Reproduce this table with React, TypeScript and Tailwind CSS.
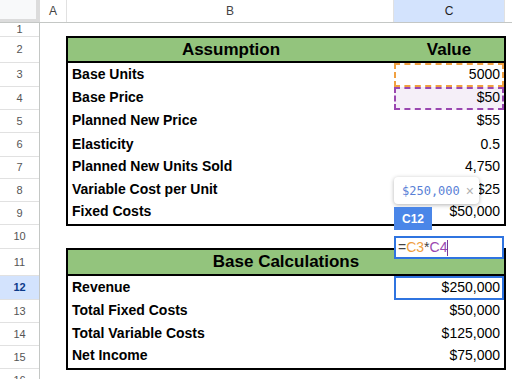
import React from 'react'

const rowHeights = [
  { n: 1, h: 'h-[14px]' },
  { n: 2, h: 'h-[26px]' },
  { n: 3, h: 'h-[24px]' },
  { n: 4, h: 'h-[23px]' },
  { n: 5, h: 'h-[23px]' },
  { n: 6, h: 'h-[24px]' },
  { n: 7, h: 'h-[22px]' },
  { n: 8, h: 'h-[23px]' },
  { n: 9, h: 'h-[23px]' },
  { n: 10, h: 'h-[24px]' },
  { n: 11, h: 'h-[27px]' },
  { n: 12, h: 'h-[24px]' },
  { n: 13, h: 'h-[23px]' },
  { n: 14, h: 'h-[23px]' },
  { n: 15, h: 'h-[23px]' },
  { n: 16, h: 'h-[23px]' },
]

const assumptions = [
  { label: 'Base Units', value: '5000', mark: 'orange' },
  { label: 'Base Price', value: '$50', mark: 'purple' },
  { label: 'Planned New Price', value: '$55' },
  { label: 'Elasticity', value: '0.5' },
  { label: 'Planned New Units Sold', value: '4,750' },
  { label: 'Variable Cost per Unit', value: '$25' },
  { label: 'Fixed Costs', value: '$50,000' },
]

const calculations = [
  { label: 'Revenue', value: '$250,000', mark: 'active' },
  { label: 'Total Fixed Costs', value: '$50,000' },
  { label: 'Total Variable Costs', value: '$125,000' },
  { label: 'Net Income', value: '$75,000' },
]

function valueClass(mark?: string) {
  if (mark === 'orange') return 'border-2 border-dashed border-[#f0a040] pr-[2px] pb-0'
  if (mark === 'purple') return 'border-2 border-dashed border-[#9a47b0] bg-[#f5eff8] pr-[2px] pb-0'
  if (mark === 'active') return 'border-2 border-[#2f74e0] pr-[2px] pb-0'
  return 'pr-1 pb-[2px]'
}

type Row = { label: string; value: string; mark?: string }

function Table({ title, valueTitle, rows, place }: { title: string; valueTitle?: string; rows: Row[]; place: string }) {
  const head = 'bg-[#93c47d] border-b-2 border-black flex items-center justify-center text-[17px] font-bold text-black'
  return (
    <div className={`${place} col-start-2 col-span-2 m-px ring-2 ring-black grid grid-cols-subgrid grid-rows-subgrid`}>
      {valueTitle ? (
        <>
          <div className={head}>{title}</div>
          <div className={head}>{valueTitle}</div>
        </>
      ) : (
        <div className={`${head} col-span-2`}>{title}</div>
      )}
      {rows.map((r) => (
        <React.Fragment key={r.label}>
          <div className="flex items-end pl-1 pb-[2px] text-[14px] font-bold text-black whitespace-nowrap">{r.label}</div>
          <div className={`flex items-end justify-end text-[14px] text-black ${valueClass(r.mark)}`}>{r.value}</div>
        </React.Fragment>
      ))}
    </div>
  )
}

export default function App() {
  return (
    <div className="relative w-[512px] h-[379px] overflow-hidden bg-white font-['Liberation_Sans',Arial,sans-serif]">
      {/* Column headers */}
      <div className="flex h-[23px] border-b border-[#c4c7c5] text-[12px] text-[#444]">
        <div className="w-[40px] bg-[#f8f9fa] border-r-4 border-b-[3px] border-[#dcdcdc]" />
        <div className="w-[27px] flex items-center justify-center border-r border-[#e1e1e1]">A</div>
        <div className="w-[327px] flex items-center justify-center border-r border-[#e1e1e1]">B</div>
        <div className="w-[111px] flex items-center justify-center border-r border-[#e1e1e1] bg-[#d3e3fd] text-[#1f1f1f]">C</div>
        <div className="flex-1" />
      </div>

      <div className="flex">
        {/* Row headers */}
        <div className="w-[40px] flex flex-col border-r border-[#c4c7c5] text-[11px]">
          {rowHeights.map((r) => (
            <div
              key={r.n}
              className={`${r.h} shrink-0 flex items-center justify-center border-b border-[#e1e1e1] ${
                r.n === 12 ? 'bg-[#d3e3fd] font-bold text-[#0b3a8a]' : 'text-[#555]'
              }`}
            >
              {r.n}
            </div>
          ))}
        </div>

        {/* Sheet body */}
        <div className="flex-1 grid grid-cols-[27px_327px_111px_1fr] grid-rows-[14px_26px_24px_23px_23px_24px_22px_23px_23px_24px_27px_24px_23px_23px_23px_1fr] h-[356px]">
          <Table title="Assumption" valueTitle="Value" rows={assumptions} place="row-start-2 row-span-8" />
          <Table title="Base Calculations" rows={calculations} place="row-start-11 row-span-5" />
        </div>
      </div>

      {/* Formula preview tooltip */}
      <div className="absolute left-[394px] top-[177px] w-[85px] h-[27px] bg-white rounded shadow-[0_1px_4px_rgba(0,0,0,0.3)] flex items-center pl-2 gap-[6px]">
        <span className="font-['DejaVu_Sans_Mono',monospace] text-[12px] text-[#5a7fd6]">$250,000</span>
        <span className="text-[14px] text-[#b0b0b0] leading-none">×</span>
      </div>

      {/* Cell reference chip */}
      <div className="absolute left-[394px] top-[207px] w-[38px] h-[23px] bg-[#4a86e8] flex items-center justify-center text-[12px] font-bold text-white">
        C12
      </div>

      {/* In-cell editor */}
      <div className="absolute left-[394px] top-[236px] w-[110px] h-[23px] bg-white border-2 border-[#2f74e0] flex items-center pl-[2px] text-[14px]">
        <span className="text-[#444]">=</span>
        <span className="text-[#f0a040]">C3</span>
        <span className="text-[#444]">*</span>
        <span className="text-[#9a47b0]">C4</span>
        <span className="w-px h-[16px] bg-[#7a3a96]" />
      </div>
    </div>
  )
}
